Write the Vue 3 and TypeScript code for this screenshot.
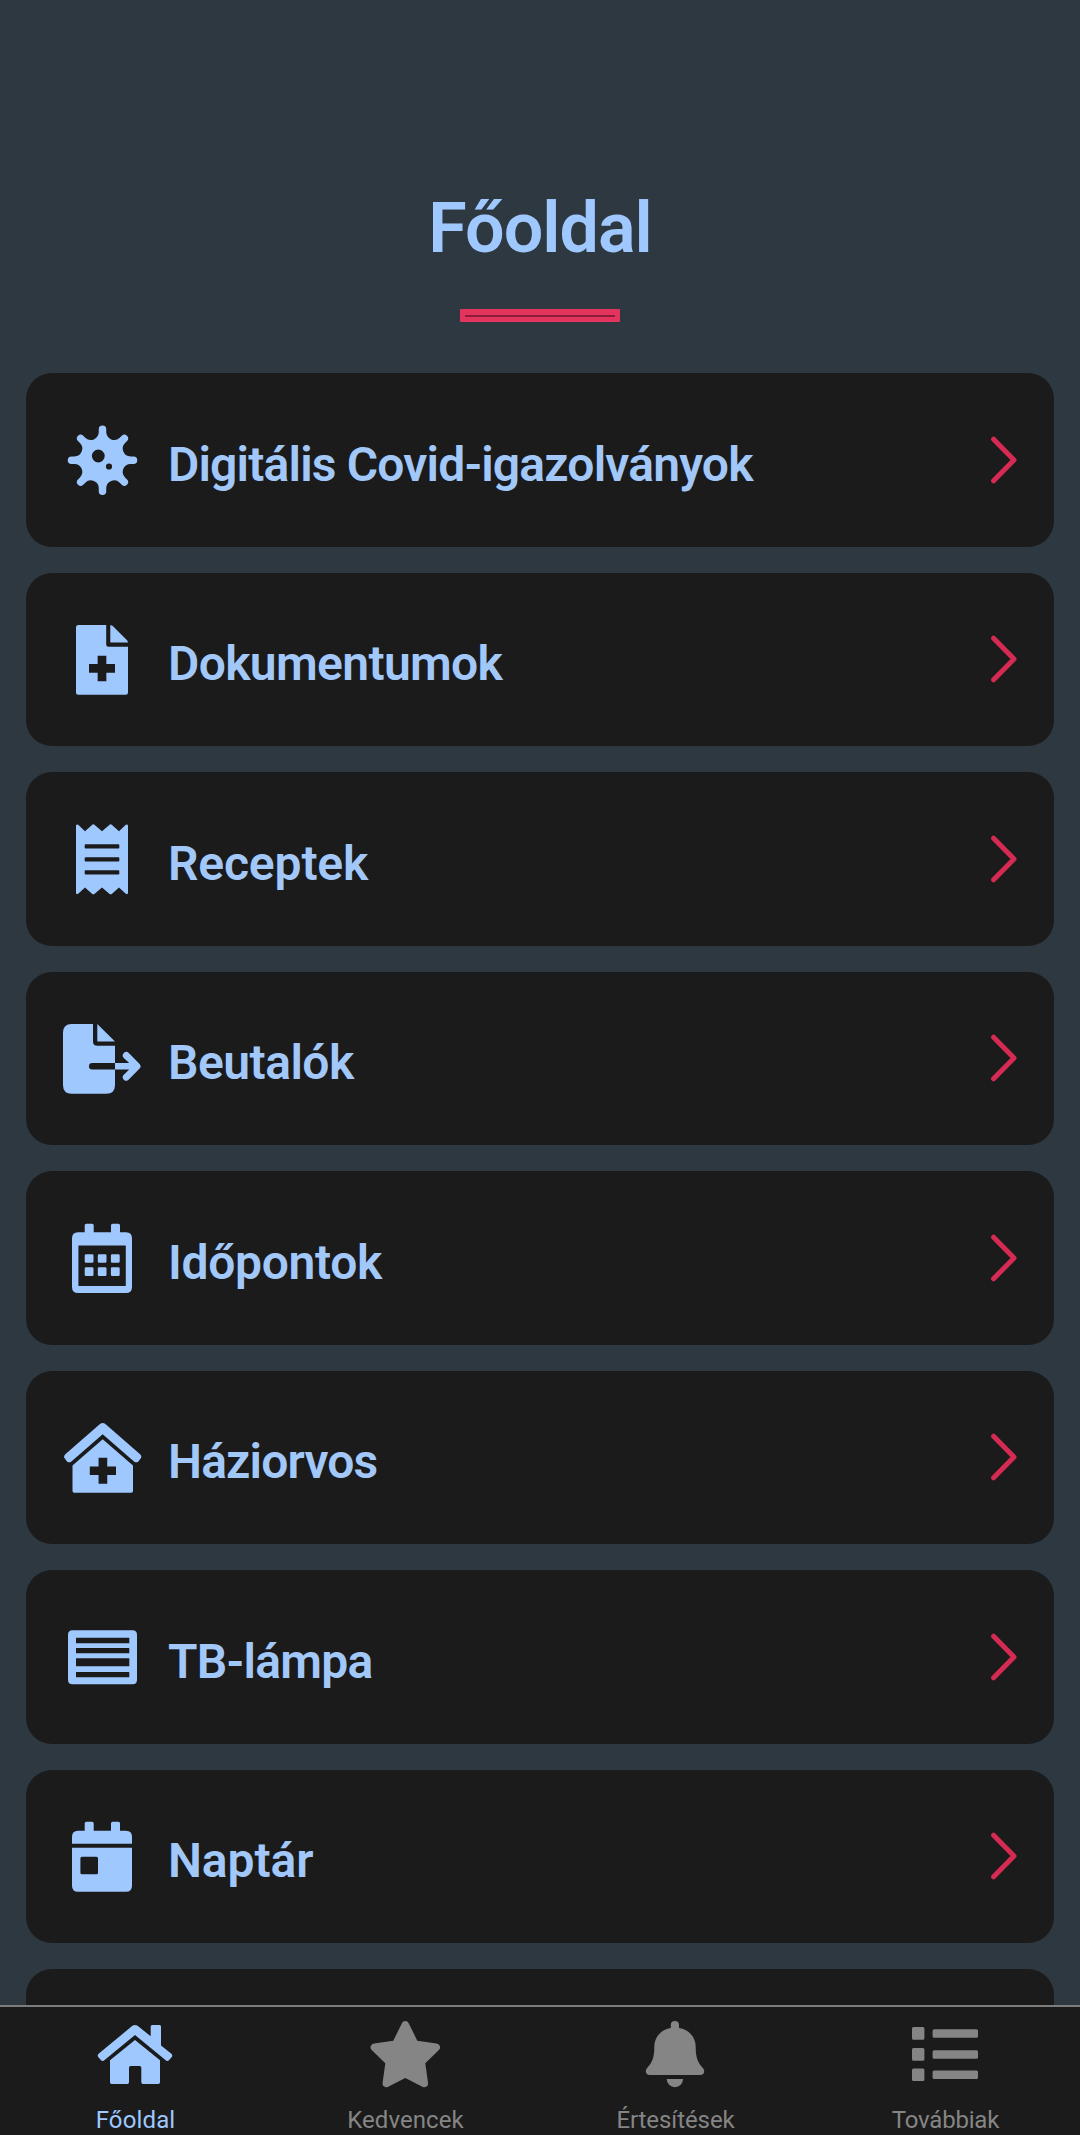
<script setup lang="ts">
interface MenuItem {
  label: string
  icon: string
  tracking: number
}

interface Tab {
  label: string
  icon: string
  tracking: number
  active?: boolean
}

/* Eight-armed virus: rounded arms joined by circular valleys. */
function virusPath(cx: number, cy: number): string {
  const arm = 3.75
  const tip = 31
  const base = 28.1
  const valley = 7.9
  const at = (angle: number, side: number, dist: number) => {
    const x = cx + side * Math.cos(angle) + dist * Math.sin(angle)
    const y = cy + side * Math.sin(angle) - dist * Math.cos(angle)
    return `${x.toFixed(2)} ${y.toFixed(2)}`
  }
  let d = ''
  for (let k = 0; k < 8; k++) {
    const a = (k * Math.PI) / 4
    const next = a + Math.PI / 4
    d += `${k ? 'L' : 'M'}${at(a, -arm, tip)}A${arm} ${arm} 0 0 1 ${at(a, arm, tip)}`
    d += `L${at(a, arm, base)}A${valley} ${valley} 0 0 0 ${at(next, -arm, base)}`
  }
  return d + 'Z'
}

/* A hole is a rectangle or circle subpath cut out by the even-odd fill rule. */
const hole = (x1: number, y1: number, x2: number, y2: number, r = 0.8) =>
  `M${x1 + r} ${y1}H${x2 - r}Q${x2} ${y1} ${x2} ${y1 + r}V${y2 - r}Q${x2} ${y2} ${x2 - r} ${y2}H${x1 + r}Q${x1} ${y2} ${x1} ${y2 - r}V${y1 + r}Q${x1} ${y1} ${x1 + r} ${y1}Z`
const dot = (x: number, y: number, r: number) =>
  `M${x - r} ${y}a${r} ${r} 0 1 0 ${2 * r} 0a${r} ${r} 0 1 0 ${-2 * r} 0Z`
const plus = (x1: number, y1: number, x2: number, y2: number) => {
  const t = 8.7
  const ax = (x1 + x2 - t) / 2
  const ay = (y1 + y2 - t) / 2
  return `M${ax} ${y1}h${t}V${ay}H${x2}v${t}H${ax + t}V${y2}h${-t}V${ay + t}H${x1}v${-t}H${ax}Z`
}

const tabsTop = hole(22.7, 5.7, 31.7, 18, 1.6) + hole(49, 5.7, 58, 18, 1.6)

const icons: Record<string, string[]> = {
  virus: [virusPath(40.5, 40.2) + dot(36.3, 36, 6.4) + dot(47, 46.5, 3.1)],
  document: [
    'M16.5 5.9H44.2V25.5Q44.2 27.7 46.4 27.7H66V73.5Q66 75.7 63.9 75.7H16.1Q14 75.7 14 73.5V7.9Q14 5.9 16.5 5.9Z' + plus(27, 36.7, 53, 62.2),
    'M48.3 5.9Q49.8 6.1 50.8 7.1L64.8 20.9Q66 22 66 23.4H48.3Z'
  ],
  receipt: [
    'M14 7Q14 4.6 16.2 5.8L23 12.2L30 5.9Q31.3 4.8 32.7 5.9L40 12.2L47.3 5.9Q48.7 4.8 50 5.9L57 12.2L63.8 5.8Q66 4.6 66 7V73.6Q66 76 63.8 74.8L57 68.4L50 74.7Q48.7 75.8 47.3 74.7L40 68.4L32.7 74.7Q31.3 75.8 30 74.7L23 68.4L16.2 74.8Q14 76 14 73.6Z' +
      hole(22.7, 25.2, 57.3, 29.6) + hole(22.7, 38.2, 57.3, 42.6) + hole(22.7, 51.2, 57.3, 55.6)
  ],
  referral: [
    'M9.7 5.9H31V23.4Q31 27.8 35.4 27.8H53V45.1H30.2A3.2 3.2 0 0 0 30.2 51.5H53V67Q53 75.7 44.3 75.7H9.7Q1 75.7 1 67V14.6Q1 5.9 9.7 5.9Z',
    'M35.3 5.9L53 23.4H35.3Z',
    'M53 45.1H67.2L61.8 39.9A3.4 3.4 0 0 1 66.8 35L77.6 46Q79.7 48.3 77.6 50.6L66.8 61.6A3.4 3.4 0 0 1 61.8 56.7L67.2 51.5H53Z'
  ],
  appointments: [
    hole(10, 14.3, 70, 75, 6) + hole(16.4, 27.5, 63.8, 68, 0.4),
    tabsTop,
    hole(22.7, 36.2, 31.5, 44.7, 1.3) + hole(35.8, 36.2, 44.5, 44.7, 1.3) + hole(48.9, 36.2, 57.7, 44.7, 1.3) +
      hole(22.7, 49.2, 31.5, 58, 1.3) + hole(35.8, 49.2, 44.5, 58, 1.3) + hole(48.9, 49.2, 57.7, 58, 1.3)
  ],
  doctor: [
    'M38 7Q40.7 4.8 43.4 7L78.1 37.2Q80.3 39.3 78.6 41.6L76.4 44.4Q74.3 46.3 72 44.4L40.7 17.2L9.4 44.4Q7.1 46.3 5 44.4L2.8 41.6Q1.1 39.3 3.3 37.2Z',
    'M40.7 22.2L71 48.4V74Q71 75.7 69.3 75.7H12.2Q10.5 75.7 10.5 74V48.4Z' + plus(27.8, 40.8, 54, 66.7)
  ],
  insurance: [
    hole(6, 13.3, 75, 67.2, 4.5) + hole(14, 20.8, 67.3, 26.2, 0.3) + hole(14, 30.9, 67.3, 36.2, 0.3) +
      hole(14, 41.3, 67.3, 49.3, 0.3) + hole(14, 55, 67.3, 60.3, 0.3)
  ],
  calendar: [
    'M16 14.7H64Q70 14.7 70 20.7V27.7H10V20.7Q10 14.7 16 14.7Z',
    tabsTop,
    'M10 31.8H70V69.7Q70 75.7 64 75.7H16Q10 75.7 10 69.7Z' + hole(18.4, 40.8, 36, 58.3, 1.5)
  ],
  home: [
    'M37.4 10.8Q40 9 42.6 10.8L55.7 21.3V11.5Q55.7 10 57.2 10H64.5Q66 10 66 11.5V30.4L76.4 38.8Q78 40.3 76.8 42L73.7 45.6Q72.4 46.6 71 45.4L40 20L9 45.4Q7.6 46.6 6.3 45.6L3.2 42Q2 40.3 3.6 38.8Z',
    'M40 25L65 45.3V67.3Q65 69 63.3 69H48Q46.3 69 46.3 67.3V52.7Q46.3 51 44.6 51H35.7Q34 51 34 52.7V67.3Q34 69 32.3 69H16.7Q15 69 15 67.3V45.3Z'
  ],
  star: [
    'M36.9 8.2A3.8 3.8 0 0 1 43.7 8.2L52.3 25.7L71.5 28.6A3.7 3.7 0 0 1 73.9 35L60.3 48.3L63 67.8A3.8 3.8 0 0 1 57.4 71.8L40.3 63L23.2 71.8A3.8 3.8 0 0 1 17.6 67.8L20.3 48.3L6.7 35A3.7 3.7 0 0 1 9.1 28.6L28.3 25.7Z'
  ],
  bell: [
    'M35.8 10.1A4.1 4.1 0 0 1 44 10.1V13C53.8 14.4 60.7 22 60.7 32C60.7 42 62.6 47.4 67.8 52.9C70.5 55.8 69 60 65.3 60H14.7C11 60 9.5 55.8 12.2 52.9C17.4 47.4 19.3 42 19.3 32C19.3 22 26.2 14.4 35.8 13Z',
    'M31.7 64H48.1A8.2 8.2 0 0 1 31.7 64Z'
  ],
  list: [
    hole(7, 12, 19.4, 24.7, 1.5) + hole(7, 33, 19.4, 45.7, 1.5) + hole(7, 53.6, 19.4, 66, 1.5),
    hole(27.6, 14.3, 73, 22.8, 1.5) + hole(27.6, 35.3, 73, 43.7, 1.5) + hole(27.6, 55.6, 73, 64, 1.5)
  ]
}

const items: MenuItem[] = [
  { label: 'Digitális Covid-igazolványok', icon: 'virus', tracking: -0.82 },
  { label: 'Dokumentumok', icon: 'document', tracking: -0.64 },
  { label: 'Receptek', icon: 'receipt', tracking: -0.16 },
  { label: 'Beutalók', icon: 'referral', tracking: -0.52 },
  { label: 'Időpontok', icon: 'appointments', tracking: -0.32 },
  { label: 'Háziorvos', icon: 'doctor', tracking: -0.83 },
  { label: 'TB-lámpa', icon: 'insurance', tracking: -0.72 },
  { label: 'Naptár', icon: 'calendar', tracking: -0.1 }
]

const tabs: Tab[] = [
  { label: 'Főoldal', icon: 'home', tracking: 0.15, active: true },
  { label: 'Kedvencek', icon: 'star', tracking: 0.08 },
  { label: 'Értesítések', icon: 'bell', tracking: -0.08 },
  { label: 'Továbbiak', icon: 'list', tracking: -0.2 }
]
</script>

<template>
  <div class="screen">
    <main class="content">
      <h1 class="title">Főoldal</h1>
      <div class="underline"><span class="underline-core"></span></div>
      <ul class="menu">
        <li v-for="item in items" :key="item.label" class="card">
          <svg class="icon" viewBox="0 0 80 80" aria-hidden="true">
            <path v-for="(d, i) in icons[item.icon]" :key="i" :d="d" fill-rule="evenodd" />
          </svg>
          <span class="label" :style="{ letterSpacing: item.tracking + 'px' }">{{ item.label }}</span>
          <svg class="chevron" viewBox="0 0 28 50" aria-hidden="true">
            <path d="M2.6 4.2L23 25L2.6 45.8" />
          </svg>
        </li>
        <li class="card"></li>
      </ul>
    </main>
    <nav class="tabbar">
      <a v-for="tab in tabs" :key="tab.label" class="tab" :class="{ active: tab.active }">
        <svg class="icon" viewBox="0 0 80 80" aria-hidden="true">
          <path v-for="(d, i) in icons[tab.icon]" :key="i" :d="d" fill-rule="evenodd" />
        </svg>
        <span class="tab-label" :style="{ letterSpacing: tab.tracking + 'px' }">{{ tab.label }}</span>
      </a>
    </nav>
  </div>
</template>

<style>
body {
  margin: 0;
  background: #2e3841;
}
</style>

<style scoped>
.screen {
  display: flex;
  flex-direction: column;
  width: 1080px;
  height: 2135px;
  overflow: hidden;
  background: #2e3841;
  font-family: Roboto, "Liberation Sans", sans-serif;
}

.content {
  flex: 1;
  min-height: 0;
  overflow: hidden;
  display: flex;
  flex-direction: column;
  align-items: center;
  padding-top: 186px;
}

.title {
  flex: none;
  margin: 0;
  font-size: 70px;
  line-height: 84px;
  font-weight: 600;
  letter-spacing: -0.98px;
  color: #9fc8ff;
}

.underline {
  flex: none;
  box-sizing: border-box;
  width: 160px;
  height: 13px;
  margin: 39px 0 51px;
  padding: 0 5px;
  display: flex;
  align-items: center;
  border-radius: 1px;
  background: #e2345c;
}

.underline-core {
  flex: 1;
  height: 2px;
  background: #8c1c38;
}

.menu {
  flex: none;
  display: flex;
  flex-direction: column;
  gap: 26px;
  width: 1028px;
  margin: 0;
  padding: 0;
  list-style: none;
}

.card {
  box-sizing: border-box;
  display: flex;
  align-items: center;
  height: 173.5px;
  padding: 0 35px 0 36px;
  border-radius: 26px;
  background: #1b1b1b;
}

.icon {
  flex: none;
  width: 80px;
  height: 80px;
  fill: currentColor;
}

.card .icon {
  color: #9fc8ff;
}

.label {
  flex: 1;
  padding: 10px 0 0 26px;
  font-size: 48px;
  line-height: 58px;
  font-weight: 600;
  white-space: nowrap;
  color: #a2c7f9;
}

.chevron {
  flex: none;
  width: 28px;
  height: 50px;
  fill: none;
  stroke: #d52b53;
  stroke-width: 5;
  stroke-linecap: round;
  stroke-linejoin: round;
}

.tabbar {
  flex: none;
  box-sizing: border-box;
  display: flex;
  height: 130px;
  border-top: 2px solid #7c7c7c;
  background: #1b1b1b;
}

.tab {
  flex: 1;
  display: flex;
  flex-direction: column;
  align-items: center;
  padding-top: 8px;
  color: #858585;
}

.tab.active {
  color: #9fc8ff;
}

.tab-label {
  margin-top: 11px;
  padding-left: 1px;
  font-size: 24px;
  line-height: 28px;
  white-space: nowrap;
}
</style>
